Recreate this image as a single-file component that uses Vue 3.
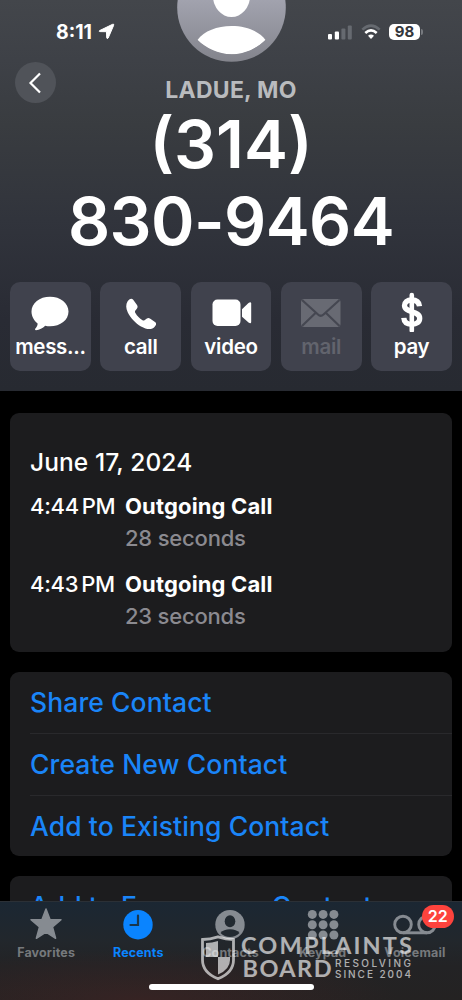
<script setup>
const calls = [
  { time: '4:44 PM', kind: 'Outgoing Call', length: '28 seconds' },
  { time: '4:43 PM', kind: 'Outgoing Call', length: '23 seconds' },
]
const links = ['Share Contact', 'Create New Contact', 'Add to Existing Contact']
const dots = [0, 1, 2, 3, 4, 5, 6, 7, 8]
</script>

<template>
  <div class="phone">
    <header class="header">
      <svg class="avatar" width="109" height="109" viewBox="0 0 109 109">
        <defs>
          <linearGradient id="av" x1="0" y1="0" x2="0" y2="1">
            <stop offset="0.4" stop-color="#a3a4b0" />
            <stop offset="1" stop-color="#83848c" />
          </linearGradient>
          <clipPath id="avc"><circle cx="54.5" cy="54.5" r="47" /></clipPath>
        </defs>
        <circle cx="54.5" cy="54.5" r="54.3" fill="url(#av)" />
        <ellipse cx="54.5" cy="43" rx="18.5" ry="21" fill="#fff" />
        <path clip-path="url(#avc)" d="M20.500 87C27 78 40 73 54.500 73S82 78 88.500 87C80 95 68 101.200 54.500 101.200S29 95 20.500 87Z" fill="#fff" />
      </svg>

      <div class="status">
        <div class="clock">
          <span>8:11</span>
          <svg width="17" height="17" viewBox="0 0 17 17"><path d="M1.600 7.600 14.600 1.300Q16.300 .700 15.600 2.400L10.200 15Q9.200 16.400 8.700 14.800L8.500 8.700 2 8.600Q.500 8.300 1.600 7.600Z" fill="#fff" stroke="#fff" stroke-width="1" stroke-linejoin="round" /></svg>
        </div>
        <div class="signals">
          <svg width="25" height="16" viewBox="0 0 25 16">
            <rect x="0" y="10" width="4" height="5.500" rx="1" fill="#fff" />
            <rect x="6.800" y="7.500" width="4.200" height="8" rx="1" fill="#fff" />
            <rect x="13.400" y="4.500" width="4" height="11" rx="1" fill="#666a70" />
            <rect x="19.800" y="1.500" width="4" height="14" rx="1" fill="#666a70" />
          </svg>
          <svg width="20" height="16" viewBox="0 0 20 16" fill="none" stroke-width="2.600">
            <path d="M1.300 5.600Q10-2.200 18.700 5.600" stroke="#666a70" />
            <path d="M4.300 9Q10 3.800 15.700 9" stroke="#fff" />
            <path d="M7 11.700Q10 9.400 13 11.700L10 15.100Z" fill="#fff" stroke="none" />
          </svg>
          <div class="battery"><b>98</b></div>
        </div>
      </div>

      <button class="back" aria-label="Back">
        <svg width="14" height="22" viewBox="0 0 14 22"><path d="M12 1.500 2.500 11l9.500 9.500" fill="none" stroke="#fff" stroke-width="2.200" /></svg>
      </button>
      <div class="place">LADUE, MO</div>
      <h1 class="number"><span>(314)</span><br /><span class="local">830-9464</span></h1>

      <div class="actions">
        <div class="action">
          <svg width="42" height="40" viewBox="0 0 42 40"><path d="M21 4.700c10.500 0 18.500 6.300 18.500 14.800S31.500 34.300 21 34.300c-1.800 0-3.300-.100-4.800-.500-2.400 2.400-5.800 4.200-9.200 4.400-1 0-1.300-.900-.600-1.600 1.500-1.700 2.300-3.200 2.200-5C4.800 28.500 2.500 24 2.500 19.500 2.500 11 10.500 4.700 21 4.700Z" fill="#fff" /></svg>
          <span class="label mess">mess...</span>
        </div>
        <div class="action">
          <svg width="42" height="40" viewBox="0 0 42 40"><path d="M7.500 9.500C9 7.200 11.500 5.600 13.200 7.800L17 13C18.200 14.800 17.500 16.400 15.800 18 14.800 19 14.700 19.800 15.400 21 17.200 24 19.500 26.400 22.500 28.200 23.600 28.900 24.500 28.700 25.500 27.600 27 26 28.600 25.600 30.300 26.800L35 30C37 31.500 36 33.700 34 35.500 30.800 38 26.500 37.500 21 34.500 15.500 31.300 10.500 26 7.800 20.500 5.700 16.200 5.800 12.300 7.500 9.500Z" fill="#fff" /></svg>
          <span class="label">call</span>
        </div>
        <div class="action">
          <svg width="42" height="40" viewBox="0 0 42 40"><rect x="2.500" y="7.500" width="28" height="26.500" rx="5" fill="#fff" /><path d="M32 17.300 38.500 11Q41 9.200 41.200 11.500V30Q41 32.300 38.500 30.500L32 24.700Z" fill="#fff" /></svg>
          <span class="label">video</span>
        </div>
        <div class="action off">
          <svg width="42" height="40" viewBox="0 0 42 40"><rect x="1" y="7" width="39.500" height="28" rx="3" fill="#686a73" /><path d="M2 8 18 22.500Q20.700 25 23.500 22.500L39.500 8M2 34 15.500 21M39.500 34 26 21" fill="none" stroke="#454751" stroke-width="2.200" /></svg>
          <span class="label">mail</span>
        </div>
        <div class="action">
          <svg width="42" height="40" viewBox="0 0 42 40"><path d="M28.500 14.200C28 10 25.500 8 20.800 8 16 8 13.500 10.500 13.500 13.600c0 7.600 15.200 4.600 15.200 12.700 0 3.700-3 6-7.900 6-5 0-7.700-2.300-8-6.400" fill="none" stroke="#fff" stroke-width="5.300" /><path d="M20.800 3V38.500" stroke="#fff" stroke-width="4.600" stroke-linecap="round" /></svg>
          <span class="label">pay</span>
        </div>
      </div>
    </header>

    <main class="content">
      <section class="card history">
        <h2>June 17, 2024</h2>
        <div v-for="c in calls" :key="c.time" class="call">
          <span class="time">{{ c.time.split(' ')[0] }}<i>{{ c.time.split(' ')[1] }}</i></span>
          <div><b>{{ c.kind }}</b><p>{{ c.length }}</p></div>
        </div>
      </section>
      <section class="card links">
        <a v-for="l in links" :key="l">{{ l }}</a>
      </section>
      <section class="card links last"><a>Add to Emergency Contacts</a></section>
    </main>

    <nav class="tabs">
      <div class="tab">
        <svg width="36" height="34" viewBox="0 0 36 34"><path d="M18 2 22 12.500 33 12.800 24.500 20 27.600 31.300 18 25.200 8.400 31.300 11.500 20 3 12.800 14 12.500Z" fill="currentColor" stroke="currentColor" stroke-width="1.500" stroke-linejoin="round" /></svg>
        <span>Favorites</span>
      </div>
      <div class="tab active">
        <svg width="36" height="34" viewBox="0 0 36 34"><circle cx="18" cy="17.700" r="14.700" fill="currentColor" /><path d="M18 8.500V18H10.500" fill="none" stroke="#18364f" stroke-width="2.200" stroke-linecap="round" /></svg>
        <span>Recents</span>
      </div>
      <div class="tab">
        <svg width="36" height="34" viewBox="0 0 36 34"><circle cx="18" cy="17.700" r="14.700" fill="currentColor" /><ellipse cx="18" cy="14.300" rx="5.300" ry="6" fill="#222a31" /><path d="M8.500 26Q11.500 22.300 18 22.300T27.500 26Q23.500 30 18 30T8.500 26Z" fill="#222a31" /></svg>
        <span>Contacts</span>
      </div>
      <div class="tab">
        <svg width="36" height="34" viewBox="0 0 36 34"><circle v-for="d in dots" :key="d" :cx="7.300 + (d % 3) * 10.800" :cy="7.400 + Math.floor(d / 3) * 10.300" r="4.500" fill="currentColor" /></svg>
        <span>Keypad</span>
      </div>
      <div class="tab">
        <svg width="44" height="34" viewBox="0 0 44 34" fill="none" stroke="currentColor" stroke-width="2.900"><circle cx="10" cy="17.500" r="8.300" /><circle cx="34" cy="17.500" r="8.300" /><path d="M10 25.800H34" /></svg>
        <span>Voicemail</span>
        <em class="badge">22</em>
      </div>
      <div class="home"></div>
    </nav>

    <svg class="watermark" width="214" height="48" viewBox="0 0 214 48">
      <path d="M18 2.800Q26 5.300 33.500 5.500V26Q33.500 38.500 18 44.800 2.500 38.500 2.500 26V5.500Q10 5.300 18 2.800Z" fill="none" stroke="#fff" stroke-width="2.800" />
      <path d="M18 7V23H6V9Q12 9 18 7ZM18 23H30V26Q30 35.500 18 40.500Z" fill="#fff" />
      <g fill="#fff">
        <text class="wm-big" x="41" y="20.300" textLength="171">COMPLAINTS</text>
        <text class="wm-big" x="42.500" y="43.300" textLength="89">BOARD</text>
        <text class="wm-small" x="135" y="33" textLength="76">RESOLVING</text>
        <text class="wm-small" x="135" y="43.500" textLength="76">SINCE 2004</text>
      </g>
    </svg>
  </div>
</template>

<style>
body { margin: 0; background: #000; }
</style>

<style scoped>
* { box-sizing: border-box; }
.phone { position: relative; width: 462px; height: 1000px; overflow: hidden; background: #000; color: #fff; font-family: Inter, "Liberation Sans", sans-serif; }
.header { position: relative; height: 391px; overflow: hidden; background: linear-gradient(#43464b 0, #3e4147 60px, #393c40 125px, #31343c 220px, #292b34 320px, #272a31 391px); }
.avatar { position: absolute; left: 176.500px; top: -47px; }
.status { display: flex; justify-content: space-between; align-items: center; height: 62px; padding: 1px 42px 0 56px; }
.clock { display: flex; align-items: center; gap: 6px; font-size: 19.500px; font-weight: 700; line-height: 24px; }
.signals { display: flex; align-items: center; gap: 8px; }
.battery { position: relative; width: 31px; height: 16px; border-radius: 5px; background: #fff; color: #34373b; font-size: 15px; line-height: 16px; text-align: center; }
.battery b { font-weight: 750; }
.battery::after { content: ""; position: absolute; right: -3px; top: 5px; width: 2px; height: 6px; border-radius: 0 2px 2px 0; background: #777a7f; }
.back { position: absolute; left: 15px; top: 62px; display: grid; place-items: center; width: 41px; height: 41px; padding: 0 2px 0 0; border: 0; border-radius: 50%; background: #505359; }
.place { margin-top: 13.500px; height: 30px; line-height: 28px; font-size: 23px; font-weight: 700; letter-spacing: .25px; text-align: center; color: #b9bbbe; }
.number { margin: 0; height: 154px; font-size: 66px; line-height: 77px; font-weight: 600; text-align: center; }
.local { letter-spacing: -.6px; }
.actions { display: grid; grid-template-columns: repeat(5, 1fr); gap: 9.300px; margin: 22px 10px 0; }
.action { display: flex; flex-direction: column; align-items: center; height: 89px; padding-top: 10px; border-radius: 10px; background: #40424d; }
.label { margin-top: 1px; font-size: 20.500px; line-height: 28px; font-weight: 600; letter-spacing: -.3px; }
.off .label { color: #62646d; }
.content { padding: 22px 10px 0; }
.card { border-radius: 9px; background: #1c1c1e; margin-bottom: 20px; }
.history { height: 239px; padding: 33px 20px 0; }
.history h2 { margin: 0; height: 44px; font-size: 24.500px; line-height: 32px; font-weight: 550; letter-spacing: .1px; }
.call { display: flex; height: 78px; font-size: 22px; line-height: 32px; }
.time { width: 95px; font-weight: 450; letter-spacing: -.3px; }
.time i { margin-left: 3px; font-style: normal; }
.call b { font-weight: 700; letter-spacing: .15px; }
.call p { margin: 0; color: #8b8a90; font-weight: 450; letter-spacing: -.2px; }
.links { padding-left: 20px; }
.links a { display: block; height: 61.300px; line-height: 61px; font-size: 26.500px; font-weight: 550; letter-spacing: .1px; color: #1a85f8; white-space: nowrap; }
.links a + a { border-top: 1px solid #29292c; line-height: 60px; }
.last { height: 80px; }
.tabs { position: absolute; left: 0; right: 0; bottom: 0; display: grid; grid-template-columns: repeat(5, 1fr); height: 99px; padding: 5px 1px 0 0; border-top: 1px solid #2b3036; background: radial-gradient(ellipse 260px 50px at 30% 100%, rgba(66, 36, 36, .6), transparent), linear-gradient(#1b2733, #22272c 40%, #232325 65%, #242222); }
.tab { position: relative; display: flex; flex-direction: column; align-items: center; color: #868b91; font-size: 12.500px; font-weight: 650; line-height: 18px; letter-spacing: .15px; }
.tab span { margin-top: 3px; color: #76797c; }
.tab.active, .tab.active span { color: #0a84ff; }
.badge { position: absolute; left: 53px; top: -2px; width: 32px; height: 23px; border-radius: 12px; background: #fd433d; color: #fff; font-size: 16px; line-height: 23px; font-style: normal; font-weight: 600; text-align: center; }
.home { position: absolute; left: 148.500px; bottom: 10px; width: 165px; height: 6px; border-radius: 3px; background: #fff; }
.watermark { position: absolute; left: 200px; top: 934px; opacity: .64; }
.wm-big { font-family: Lato, sans-serif; font-weight: 700; font-size: 23.500px; }
.wm-small { font-family: Inter, sans-serif; font-weight: 500; font-size: 10px; }
</style>
